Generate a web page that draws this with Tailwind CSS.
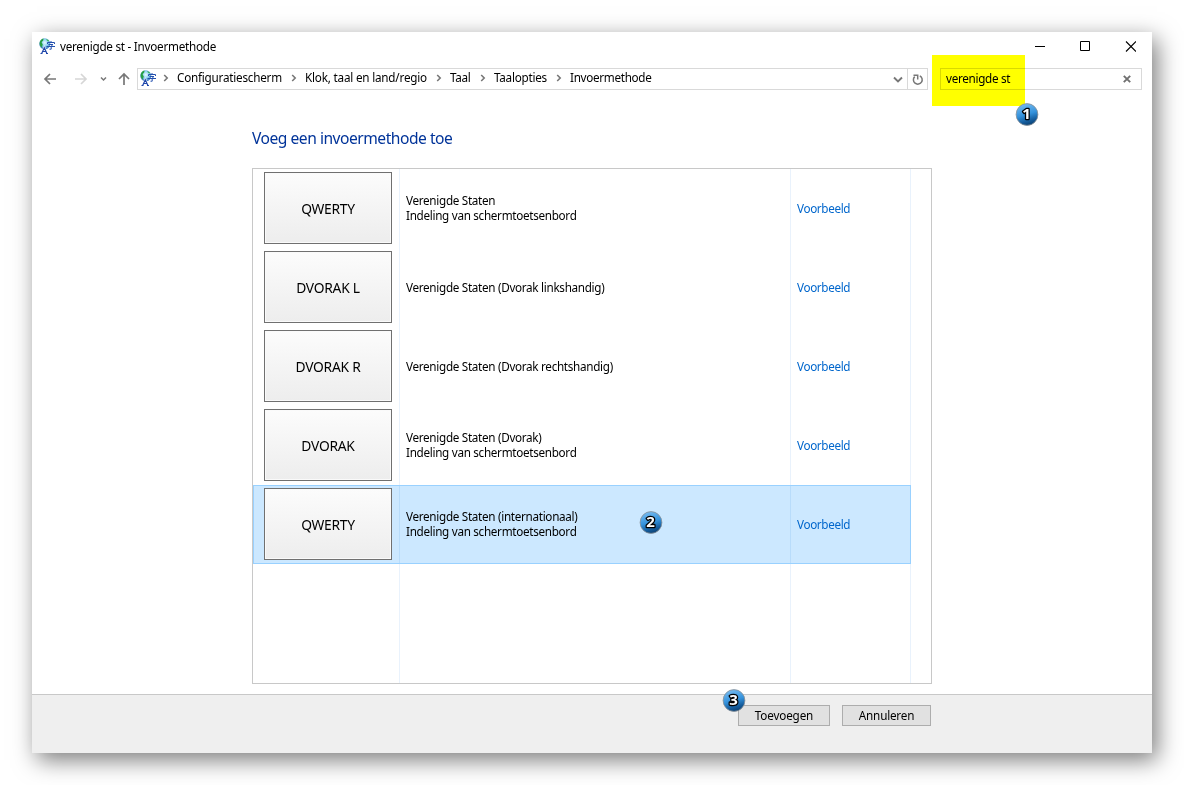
<!DOCTYPE html>
<html lang="nl">
<head>
<meta charset="utf-8">
<title>verenigde st - Invoermethode</title>
<script src="https://cdn.jsdelivr.net/npm/@tailwindcss/browser@4"></script>
</head>
<body class="h-[785px] w-[1184px] overflow-hidden bg-white p-8 font-['Noto_Sans','Open_Sans',sans-serif] text-[11.7px] tracking-[-0.3px] text-black">
<svg class="absolute size-0">
  <defs>
    <radialGradient id="globe" cx=".5" cy=".4" r=".6"><stop offset="0" stop-color="#e8fbff"/><stop offset=".5" stop-color="#8fd2f0"/><stop offset="1" stop-color="#3474bd"/></radialGradient>
    <linearGradient id="ball" x1="0.3" y1="0" x2="0.6" y2="1"><stop offset="0" stop-color="#78bcf0"/><stop offset=".5" stop-color="#3492dc"/><stop offset=".8" stop-color="#155c9c"/><stop offset="1" stop-color="#0a3f70"/></linearGradient>
    <symbol id="lang" viewBox="0 0 17 17">
      <circle cx="5.800" cy="5.800" r="5.500" fill="url(#globe)"/>
      <path d="M.8 4C1.600 1.800 3 .9 4.600.6L4.200 2.500 2.600 4.200 3.800 6.500 2.600 9.500C.9 8 .3 6 .8 4z" fill="#27a043"/>
      <path d="M7 1l2.500 1 .8 1.500-2-.5z" fill="#3cb55a"/>
      <path d="M8.500 6V4.500h7V6M12 3v1.500M9.500 6.500h4.500L12.200 8M7.500 8.500H16M12.200 8v3.200h-1.700" stroke="#2450ae" stroke-width="1" fill="none"/>
      <path d="M2.800 15.500L5.300 9.800 7.800 15.500M3.800 13.500h3" stroke="#fff" stroke-width="2.200" fill="none"/>
      <path d="M2.700 15.500L5.300 9.800 7.900 15.500M3.800 13.500h3M1.500 15.500h2M7 15.500h2" stroke="#1f46aa" stroke-width="1.200" fill="none"/>
    </symbol>
    <symbol id="sep" viewBox="0 0 6 8"><path d="M1.200 1l3 3-3 3" stroke="#777" stroke-width="1.600" fill="none"/></symbol>
  </defs>
</svg>
<main class="relative flex h-[721px] w-[1120px] flex-col bg-white shadow-[5px_7px_22px_rgba(0,0,0,0.52)]">
  <header class="flex h-[30px] items-center pr-4 pl-[7px]">
    <svg class="-mt-0.5 h-[17px] w-[17px]"><use href="#lang"/></svg>
    <h1 class="ml-1 grow whitespace-nowrap tracking-[-0.25px]">verenigde st - Invoermethode</h1>
    <svg class="h-[30px] w-[101px]" viewBox="0 0 101 30" fill="none" stroke="#000"><path d="M0 14.500h10M45.500 9.500h9v9h-9z"/><path d="M91 9.500l10 10M101 9.500l-10 10" stroke-width="1.100"/></svg>
  </header>
  <nav class="flex h-[34px] items-center">
    <svg class="h-[22px] w-[105px] shrink-0" viewBox="0 0 105 22" fill="none" stroke="#777" stroke-width="1.700">
      <path d="M24 11H13.500M18 6l-5 5 5 5"/>
      <path d="M43 11h10.500M49 6l5 5-5 5" stroke="#d6d6d6"/>
      <path d="M69 9.500l2.500 2.500L74 9.500" stroke-width="1.500"/>
      <path d="M92 17V6M87 11l5-5 5 5"/>
    </svg>
    <div class="flex h-[22px] w-[791px] items-center border border-[#d9d9d9] pb-0.5">
      <svg class="mt-px ml-0.5 h-[17px] w-[17px] shrink-0"><use href="#lang"/></svg>
      <svg class="ml-1.5 h-2 w-1.5"><use href="#sep"/></svg>
      <span class="ml-2 w-[105px] whitespace-nowrap tracking-[-0.22px]">Configuratiescherm</span>
      <svg class="ml-[9px] h-2 w-1.5"><use href="#sep"/></svg>
      <span class="ml-2 w-[122px] whitespace-nowrap tracking-[-0.2px]">Klok, taal en land/regio</span>
      <svg class="ml-[9px] h-2 w-1.5"><use href="#sep"/></svg>
      <span class="ml-2 w-[21px] whitespace-nowrap">Taal</span>
      <svg class="ml-[9px] h-2 w-1.5"><use href="#sep"/></svg>
      <span class="ml-2 w-[53px] whitespace-nowrap tracking-[-0.25px]">Taalopties</span>
      <svg class="ml-[9px] h-2 w-1.5"><use href="#sep"/></svg>
      <span class="ml-2 grow whitespace-nowrap">Invoermethode</span>
      <svg class="mt-0.5 h-5 w-[34px]" viewBox="0 0 34 20" fill="none" stroke="#777" stroke-width="1.900"><path d="M1 8.500l4 4 4-4"/><path d="M14.500 0v20" stroke="#d9d9d9" stroke-width="1"/><path d="M21.700 7.600A4.400 4.400 0 1 0 26.800 6.800M20.500 6.200h4.200v4.200" stroke-width="1.500"/></svg>
    </div>
    <div class="ml-3 flex h-[22px] w-[202px] items-center justify-between border border-[#d9d9d9] pr-2.5 pl-[5px]">
      <span>verenigde st</span>
      <svg class="h-2 w-2" viewBox="0 0 8 8"><path d="M.8.8l6.400 6.400M7.200.8L.8 7.200" stroke="#707070" stroke-width="1.900"/></svg>
    </div>
  </nav>
  <div class="absolute top-[23px] left-[900px] h-[51px] w-[93px] bg-[#ffff00] mix-blend-multiply"></div>

  <section class="flex grow flex-col pl-[220px]">
    <h2 class="mt-[30px] h-[42px] text-[15.6px] leading-[24px] tracking-[-0.48px] whitespace-nowrap text-[#003399]">Voeg een invoermethode toe</h2>
    <div class="flex h-[516px] w-[680px] flex-col border border-[#c8c8c8] leading-[15px]" id="list"></div>
  </section>

  <footer class="flex h-[59px] gap-3 border-t border-[#c8c8c8] bg-[#efefef] pt-[10px] pl-[706px]">
    <button class="h-[21px] w-[92px] border border-[#adadad] bg-[#e1e1e1] leading-[19px] tracking-[-0.15px]">Toevoegen</button>
    <button class="h-[21px] w-[89px] border border-[#adadad] bg-[#e1e1e1] leading-[19px] tracking-[-0.2px]">Annuleren</button>
  </footer>

  <svg class="absolute top-[70px] left-[983px] h-6 w-6 tracking-normal" viewBox="0 0 24 24"><circle cx="12" cy="12.500" r="10.900" fill="url(#ball)" stroke="#8b9096" stroke-width=".8"/><text x="11.500" y="17.300" text-anchor="middle" font-family="Open Sans" font-weight="700" font-size="15" fill="#fff" stroke="#000" stroke-width="2.600" paint-order="stroke" stroke-linejoin="round">1</text></svg>
  <svg class="absolute top-[478px] left-[607px] h-6 w-6 tracking-normal" viewBox="0 0 24 24"><circle cx="12" cy="12.500" r="10.900" fill="url(#ball)" stroke="#8b9096" stroke-width=".8"/><text x="11.500" y="17.300" text-anchor="middle" font-family="Open Sans" font-weight="700" font-size="15" fill="#fff" stroke="#000" stroke-width="2.600" paint-order="stroke" stroke-linejoin="round">2</text></svg>
  <svg class="absolute top-[656px] left-[690px] h-6 w-6 tracking-normal" viewBox="0 0 24 24"><circle cx="12" cy="12.500" r="10.900" fill="url(#ball)" stroke="#8b9096" stroke-width=".8"/><text x="11.500" y="17.300" text-anchor="middle" font-family="Open Sans" font-weight="700" font-size="15" fill="#fff" stroke="#000" stroke-width="2.600" paint-order="stroke" stroke-linejoin="round">3</text></svg>
</main>
<script>
const kb = 'Indeling van schermtoetsenbord';
const rows = [
  ['QWERTY', ['Verenigde Staten', kb]],
  ['DVORAK L', ['Verenigde Staten (Dvorak linkshandig)']],
  ['DVORAK R', ['Verenigde Staten (Dvorak rechtshandig)']],
  ['DVORAK', ['Verenigde Staten (Dvorak)', kb]],
  ['QWERTY', ['Verenigde Staten (internationaal)', kb], true],
];
document.getElementById('list').innerHTML = rows.map(([key, lines, on]) => `
  <div class="flex h-[79px] w-[658px] shrink-0 ${on ? 'bg-[#cce8ff] outline outline-[#99d1ff] -outline-offset-1' : ''}">
    <div class="w-[147px] border-r ${on ? 'border-[#b8dcfb]' : 'border-[#e9f2fc]'} pt-[3px] pl-[11px]">
      <div class="flex h-[72px] w-[128px] items-center justify-center border border-[#707070] bg-linear-to-b from-[#fcfcfc] to-[#ededed] pt-px text-[13.8px] tracking-[-0.25px] shadow-[inset_0_0_0_1px_#fafafa]">${key}</div>
    </div>
    <div class="flex w-[391px] flex-col justify-center border-r ${on ? 'border-[#b8dcfb]' : 'border-[#e9f2fc]'} ${lines.length > 1 ? 'pb-0.5' : ''} pl-1.5">${lines.map(l => `<span>${l}</span>`).join('')}</div>
    <div class="flex w-[120px] items-center border-r ${on ? 'border-[#99d1ff]' : 'border-[#e9f2fc]'} pl-1.5 tracking-[-0.35px] text-[#0066cc]">Voorbeeld</div>
  </div>`).join('') + `
  <div class="flex w-[658px] grow"><div class="w-[147px] border-r border-[#e9f2fc]"></div><div class="w-[391px] border-r border-[#e9f2fc]"></div><div class="w-[120px] border-r border-[#e9f2fc]"></div></div>`;
</script>
</body>
</html>
